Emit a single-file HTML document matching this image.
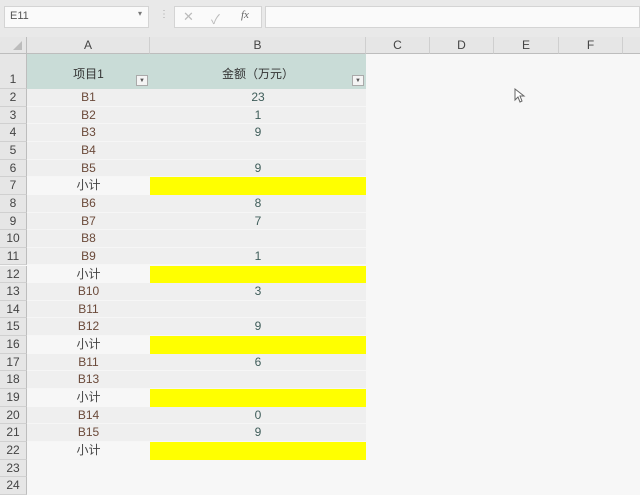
<!DOCTYPE html>
<html><head><meta charset="utf-8"><style>
*{margin:0;padding:0;box-sizing:border-box}
body{width:640px;height:488px;overflow:hidden;background:#f7f7f7;font-family:"Liberation Sans","Noto Sans CJK SC",sans-serif;font-size:12px;color:#444;position:relative}
.a{position:absolute}
.ch{position:absolute;top:37px;height:17px;background:#e6e6e6;border-right:1px solid #cfcfcf;border-bottom:1px solid #bdbdbd;text-align:center;line-height:17px;color:#444;font-size:12px}
.rh{position:absolute;left:0;width:27px;background:#e6e6e6;border-right:1px solid #bdbdbd;border-bottom:1px solid #d0d0d0;text-align:center;color:#444;font-size:12px}
.cell{position:absolute;text-align:center;font-size:12px}
</style></head><body>
<div class="a" style="left:0;top:0;width:640px;height:37px;background:#e9e9e9"></div>
<div class="a" style="left:4px;top:6px;width:145px;height:22px;background:#fafafa;border:1px solid #d4d4d4"></div>
<div class="a" style="left:10px;top:10px;font-size:11px;color:#555">E11</div>
<div class="a" style="left:138px;top:9px;font-size:8px;color:#777">▾</div>
<div class="a" style="left:159px;top:9px;font-size:10px;color:#aaa">⋮</div>
<div class="a" style="left:174px;top:6px;width:88px;height:22px;background:#fafafa;border:1px solid #d4d4d4"></div>
<div class="a" style="left:183px;top:9px;font-size:13px;color:#bbb">✕</div>
<div class="a" style="left:211px;top:9px;font-size:13px;color:#bbb">✓</div>
<div class="a" style="left:241px;top:9px;font-size:11px;color:#666;font-style:italic;font-family:'Liberation Serif',serif">fx</div>
<div class="a" style="left:265px;top:6px;width:375px;height:22px;background:#fafafa;border:1px solid #d4d4d4"></div>
<div class="ch" style="left:0;width:27px;border-right:1px solid #bdbdbd"><svg width="27" height="17"><polygon points="22,4 22,13 13,13" fill="#bcbcbc"/></svg></div>
<div class="ch" style="left:27px;width:123px">A</div>
<div class="ch" style="left:150px;width:216px">B</div>
<div class="ch" style="left:366px;width:64px">C</div>
<div class="ch" style="left:430px;width:64px">D</div>
<div class="ch" style="left:494px;width:65px">E</div>
<div class="ch" style="left:559px;width:64px">F</div>
<div class="ch" style="left:623px;width:20px"></div>
<div class="rh" style="top:54px;height:35px;line-height:50px">1</div>
<div class="a" style="left:27px;top:54px;width:339px;height:35px;background:#c9dcd7"></div>
<div class="cell" style="left:27px;top:65px;width:123px;color:#333">项目1</div>
<div class="cell" style="left:150px;top:65px;width:216px;color:#333">金额（万元）</div>
<div class="a" style="left:136px;top:75px;width:12px;height:11px;background:#f4f4f4;border:1px solid #aaa;font-size:6px;text-align:center;line-height:10px;color:#555">▼</div>
<div class="a" style="left:352px;top:75px;width:12px;height:11px;background:#f4f4f4;border:1px solid #aaa;font-size:6px;text-align:center;line-height:10px;color:#555">▼</div>
<div id="rows"></div>
<script>
var d=[["B1","23"],["B2","1"],["B3","9"],["B4",""],["B5","9"],["小计","Y"],["B6","8"],["B7","7"],["B8",""],["B9","1"],["小计","Y"],["B10","3"],["B11",""],["B12","9"],["小计","Y"],["B11","6"],["B13",""],["小计","Y"],["B14","0"],["B15","9"],["小计","Y"],null,null];
var h="";
for(var i=0;i<d.length;i++){var t=89+i*17.65,r=i+2;
h+='<div class="rh" style="top:'+t+'px;height:17.65px;line-height:17px">'+r+'</div>';
var x=d[i];if(!x)continue;
if(x[1]=="Y"){h+='<div class="a" style="left:150px;top:'+t+'px;width:216px;height:17.65px;background:#ffff00"></div>';
h+='<div class="cell" style="left:27px;top:'+t+'px;width:123px;line-height:17px;color:#444">'+x[0]+'</div>';}
else{h+='<div class="a" style="left:27px;top:'+t+'px;width:339px;height:17.65px;background:#efefef;border-bottom:1px solid #f6f6f6"></div>';
h+='<div class="cell" style="left:27px;top:'+t+'px;width:123px;line-height:17px;color:#6b4a3a">'+x[0]+'</div>';
h+='<div class="cell" style="left:150px;top:'+t+'px;width:216px;line-height:17px;color:#3f5d5a">'+x[1]+'</div>';}}
document.getElementById("rows").innerHTML=h;
</script>
<svg class="a" style="left:514px;top:88px" width="12" height="16"><path d="M1,1 L1,12 L4,9 L6,14 L8,13 L6,8 L10,8 Z" fill="#fff" stroke="#666" stroke-width="1"/></svg>
</body></html>
